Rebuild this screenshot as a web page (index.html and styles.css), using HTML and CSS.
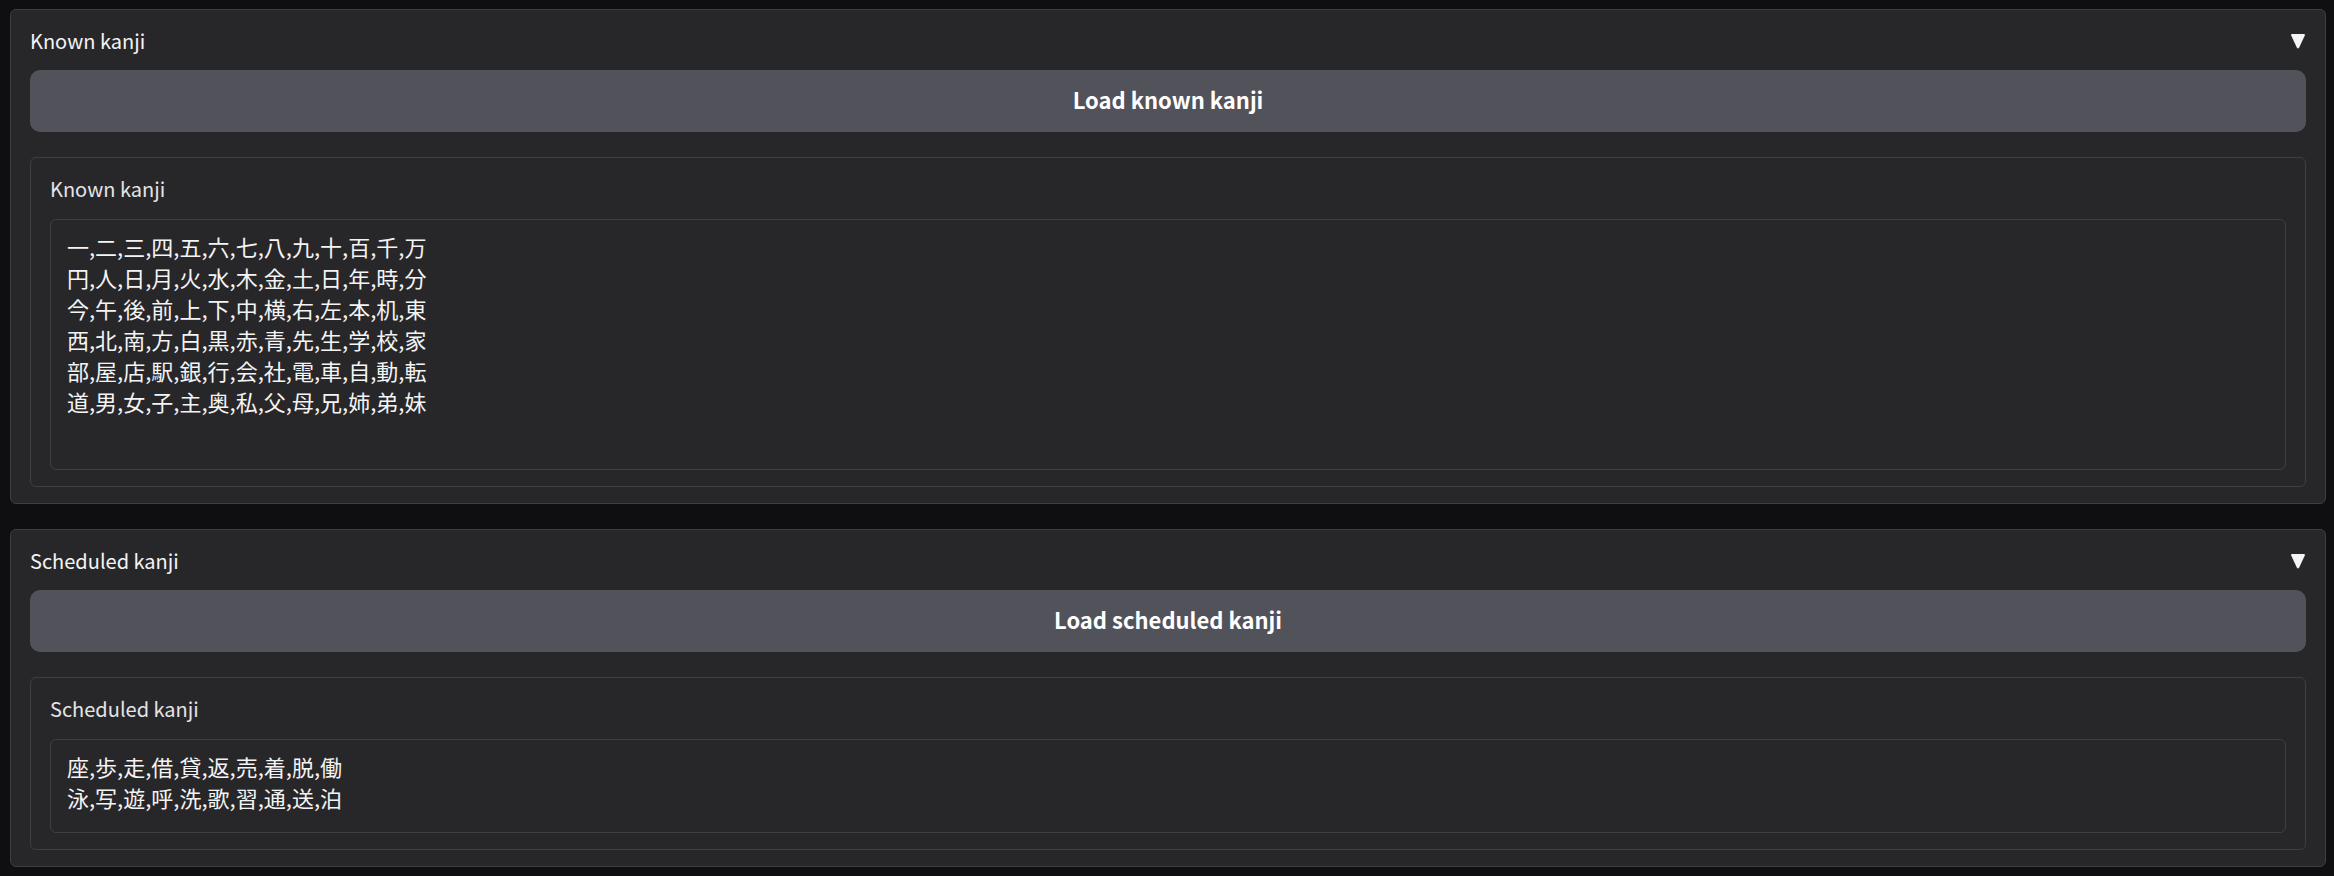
FILE: index.html
```html
<!DOCTYPE html>
<html lang="en">
<head>
<meta charset="utf-8">
<title>Kanji</title>
<link rel="stylesheet" href="styles.css">
</head>
<body>
<main class="page">
  <section class="panel">
    <button class="panel-header" type="button" aria-expanded="true">
      <span>Known kanji</span>
      <svg class="arrow" viewBox="0 0 14 15" aria-hidden="true"><path d="M1 0H13Q14.2 0.2 13.8 1.5L8.2 13.6Q7 15.4 5.8 13.6L0.2 1.5Q-0.2 0.2 1 0Z"/></svg>
    </button>
    <button class="load" type="button">Load known kanji</button>
    <div class="block">
      <label class="label" for="known">Known kanji</label>
      <textarea class="text tall" id="known" rows="7" lang="ja" spellcheck="false">一,二,三,四,五,六,七,八,九,十,百,千,万
円,人,日,月,火,水,木,金,土,日,年,時,分
今,午,後,前,上,下,中,横,右,左,本,机,東
西,北,南,方,白,黒,赤,青,先,生,学,校,家
部,屋,店,駅,銀,行,会,社,電,車,自,動,転
道,男,女,子,主,奥,私,父,母,兄,姉,弟,妹
</textarea>
    </div>
  </section>
  <section class="panel">
    <button class="panel-header" type="button" aria-expanded="true">
      <span>Scheduled kanji</span>
      <svg class="arrow" viewBox="0 0 14 15" aria-hidden="true"><path d="M1 0H13Q14.2 0.2 13.8 1.5L8.2 13.6Q7 15.4 5.8 13.6L0.2 1.5Q-0.2 0.2 1 0Z"/></svg>
    </button>
    <button class="load" type="button">Load scheduled kanji</button>
    <div class="block">
      <label class="label" for="scheduled">Scheduled kanji</label>
      <textarea class="text" id="scheduled" rows="2" lang="ja" spellcheck="false">座,歩,走,借,貸,返,売,着,脱,働
泳,写,遊,呼,洗,歌,習,通,送,泊</textarea>
    </div>
  </section>
</main>
</body>
</html>
```
FILE: styles.css
```css
* {
  box-sizing: border-box;
}

body {
  margin: 0;
  background: #0f0f11;
  color: #f4f4f5;
  font-family: "Noto Sans CJK JP", sans-serif;
  font-size: 20px;
  line-height: 30px;
}

button,
textarea {
  font-family: inherit;
  color: inherit;
}

.page {
  display: flex;
  flex-direction: column;
  gap: 25px;
  padding: 9px 8px 9px 10px;
}

.panel {
  display: flex;
  flex-direction: column;
  padding: 16px 19px;
  background: #27272a;
  border: 1px solid #3f3f42;
  border-radius: 6px;
}

.panel-header {
  display: flex;
  justify-content: space-between;
  align-items: center;
  padding: 0;
  margin-bottom: 14px;
  border: 0;
  background: none;
  font-size: 20px;
  line-height: 30px;
}

.arrow {
  width: 14px;
  height: 15px;
  margin-right: 1px;
  fill: #f4f4f5;
}

.load {
  margin-bottom: 25px;
  padding: 14px 16px 18px;
  border: 0;
  border-radius: 10px;
  background: #52525b;
  color: #fff;
  font-size: 22px;
  font-weight: 700;
  line-height: 30px;
}

.block {
  display: flex;
  flex-direction: column;
  padding: 16px 19px;
  border: 1px solid #3f3f42;
  border-radius: 6px;
}

.label {
  margin-bottom: 15px;
  color: #e4e4e7;
}

.text {
  display: block;
  width: 100%;
  padding: 11px 16px 19px;
  border: 1px solid #3f3f42;
  border-radius: 6px;
  outline: 0;
  background: transparent;
  font-size: 22px;
  line-height: 31px;
  resize: none;
  overflow: hidden;
}

.tall {
  min-height: 251px;
}
```
